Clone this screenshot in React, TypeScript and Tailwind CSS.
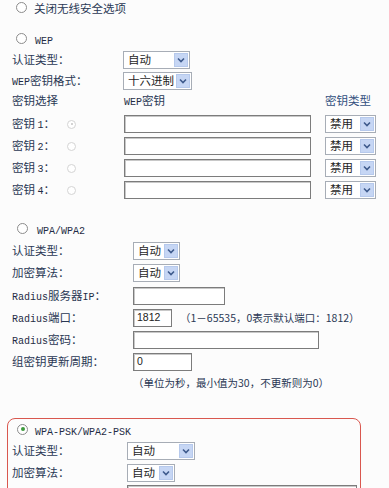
import React from "react";

const CJK = '"Noto Sans CJK SC", "Noto Sans", sans-serif';
const MONO = '"Liberation Mono", "DejaVu Sans Mono", monospace';

function Radio({ checked = false, light = false, green = false, size = 11 }: { checked?: boolean; light?: boolean; green?: boolean; size?: number }) {
  return (
    <span
      className={`inline-flex items-center justify-center rounded-full border bg-white shrink-0 ${light ? "border-[#d4d4d4]" : "border-[#8c8c8c]"}`}
      style={{ width: size, height: size }}
    >
      {checked && (
        <span
          className={`rounded-full ${green ? "bg-[#3d9a3d]" : "bg-[#c4c4c4]"}`}
          style={{ width: size - 7, height: size - 7 }}
        />
      )}
    </span>
  );
}

function Select({ text, w }: { text: string; w: number }) {
  return (
    <div
      className="flex items-center h-[18px] border border-[#a7adb6] bg-white pl-[4px] pr-[1px] shrink-0"
      style={{ width: w }}
    >
      <span className="flex-1 text-[11.5px] leading-none text-[#1e1e1e]">{text}</span>
      <span className="flex items-center justify-center w-[14px] h-[14px] bg-[#c6d6f4] border border-[#b6c9ec]">
        <svg width="8" height="6" viewBox="0 0 8 6">
          <path d="M1 1.5 L4 4.5 L7 1.5" fill="none" stroke="#3e5a8c" strokeWidth="1.6" />
        </svg>
      </span>
    </div>
  );
}

function Input({ w, value = "" }: { w: number; value?: string }) {
  return (
    <div
      className="h-[18px] border border-[#7c7c7c] bg-white shadow-[inset_1px_1px_0_#c8c8c8] flex items-center pl-[3px] text-[10.5px] text-[#222] shrink-0"
      style={{ width: w, fontFamily: '"Liberation Sans", Arial, sans-serif' }}
    >
      {value}
    </div>
  );
}

function M({ children }: { children: React.ReactNode }) {
  return (
    <span className="text-[10px] text-[#1f2c45]" style={{ fontFamily: MONO }}>
      {children}
    </span>
  );
}

function Label({ w, children }: { w: number; children: React.ReactNode }) {
  return (
    <div className="shrink-0 text-[11.5px] text-[#2a3854] leading-none" style={{ width: w }}>
      {children}
    </div>
  );
}

function Row({ children, mt = 0 }: { children: React.ReactNode; mt?: number }) {
  return (
    <div className="flex items-center h-[18px]" style={{ marginTop: mt }}>
      {children}
    </div>
  );
}

export default function App() {
  return (
    <div
      className="w-[389px] h-[488px] overflow-hidden bg-[#fcfcfc] pl-[12px] text-[#2a3854]"
      style={{ fontFamily: CJK }}
    >
      {/* close security */}
      <div className="flex items-center h-[15px] pl-[4px]">
        <Radio />
        <span className="ml-[7px] text-[11.5px] leading-[14px]">关闭无线安全选项</span>
      </div>

      {/* WEP */}
      <div className="flex items-center h-[18px] pl-[4px] mt-[14px]">
        <Radio />
        <span className="ml-[8px] leading-none">
          <M>WEP</M>
        </span>
      </div>
      <Row mt={4}>
        <Label w={111}>认证类型：</Label>
        <Select text="自动" w={67} />
      </Row>
      <Row mt={3}>
        <Label w={111}>
          <M>WEP</M>密钥格式：
        </Label>
        <Select text="十六进制" w={69} />
      </Row>
      <Row mt={2}>
        <Label w={112}>密钥选择</Label>
        <div className="w-[201px] text-[11.5px] leading-none">
          <M>WEP</M>密钥
        </div>
        <div className="text-[11.5px] leading-none text-[#33507e]">密钥类型</div>
      </Row>
      {[1, 2, 3, 4].map((n, i) => (
        <Row key={n} mt={i === 0 ? 5 : 4}>
          <div className="w-[112px] flex items-center shrink-0">
            <span className="text-[11.5px] leading-none w-[55px]">
              密钥 <M>{n}</M>：
            </span>
            <Radio size={9} light checked={n === 1} />
          </div>
          <Input w={187} />
          <div className="w-[14px]" />
          <Select text="禁用" w={51} />
        </Row>
      ))}

      {/* WPA/WPA2 */}
      <div className="flex items-center h-[18px] pl-[5px] mt-[20px]">
        <Radio />
        <span className="ml-[9px] leading-none">
          <M>WPA/WPA2</M>
        </span>
      </div>
      <Row mt={5}>
        <Label w={121}>认证类型：</Label>
        <Select text="自动" w={47} />
      </Row>
      <Row mt={4}>
        <Label w={121}>加密算法：</Label>
        <Select text="自动" w={47} />
      </Row>
      <Row mt={5}>
        <Label w={121}>
          <M>Radius</M>服务器<M>IP</M>：
        </Label>
        <Input w={92} />
      </Row>
      <Row mt={4}>
        <Label w={121}>
          <M>Radius</M>端口：
        </Label>
        <Input w={39} value="1812" />
        <span className="ml-[8px] text-[10.5px] leading-none">（1－65535，0表示默认端口：1812）</span>
      </Row>
      <Row mt={4}>
        <Label w={121}>
          <M>Radius</M>密码：
        </Label>
        <Input w={186} />
      </Row>
      <Row mt={4}>
        <Label w={121}>组密钥更新周期：</Label>
        <Input w={59} value="0" />
      </Row>
      <Row mt={3}>
        <div className="w-[121px] shrink-0" />
        <span className="text-[10.5px] leading-none">（单位为秒，最小值为30，不更新则为0）</span>
      </Row>

      {/* WPA-PSK */}
      <div className="ml-[-5px] mt-[26px] w-[354px] h-[120px] border border-[#d9574f] rounded-[8px] pl-[4px] pt-[1px]">
        <div className="flex items-center h-[18px] pl-[5px]">
          <Radio checked green />
          <span className="ml-[7px] leading-none">
            <M>WPA-PSK/WPA2-PSK</M>
          </span>
        </div>
        <Row mt={4}>
          <Label w={115}>认证类型：</Label>
          <Select text="自动" w={68} />
        </Row>
        <Row mt={4}>
          <Label w={115}>加密算法：</Label>
          <Select text="自动" w={48} />
        </Row>
        <Row mt={3}>
          <div className="w-[115px] shrink-0" />
          <Input w={230} />
        </Row>
      </div>
    </div>
  );
}
